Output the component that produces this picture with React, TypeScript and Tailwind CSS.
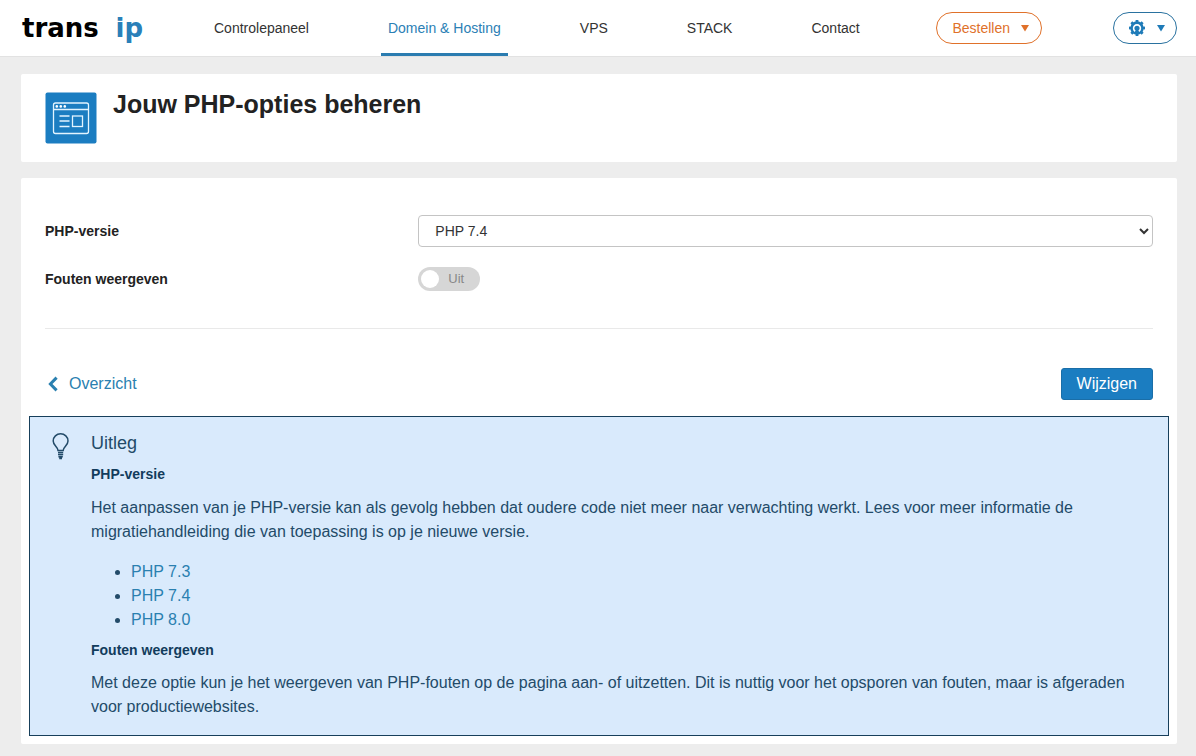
import React, { useState } from "react";

const navItems = [
  { label: "Controlepaneel", active: false },
  { label: "Domein & Hosting", active: true },
  { label: "VPS", active: false },
  { label: "STACK", active: false },
  { label: "Contact", active: false },
];

const versions = ["PHP 7.3", "PHP 7.4", "PHP 8.0"];

function Caret() {
  return (
    <svg className="h-2 w-2 fill-current" viewBox="0 0 8 8" aria-hidden="true">
      <path d="M0 1h8L4 7.5z" />
    </svg>
  );
}

function GearIcon() {
  return (
    <svg className="h-4 w-4" viewBox="0 0 16 16" aria-hidden="true">
      <g fill="currentColor">
        <circle cx="8" cy="8" r="6.7" />
        <rect x="6.6" y="0" width="2.8" height="16" />
        <rect x="0" y="6.6" width="16" height="2.8" />
        <rect x="6.6" y="0" width="2.8" height="16" transform="rotate(45 8 8)" />
        <rect x="6.6" y="0" width="2.8" height="16" transform="rotate(-45 8 8)" />
      </g>
      <path d="M6.2 11.2A3.4 3.4 0 1 1 9.8 11.2" fill="none" stroke="#fff" strokeWidth="1.6" />
    </svg>
  );
}

function WindowIcon() {
  return (
    <svg className="size-[52px] shrink-0" viewBox="0 0 52 52" aria-hidden="true">
      <rect x="0.5" y="0.5" width="51" height="51" rx="2" fill="#1b7dc1" />
      <g fill="none" stroke="#e2f4ff" strokeWidth="1.3">
        <rect x="8.5" y="11" width="35" height="30.5" rx="2" />
        <path d="M8.5 17.5h35M14.5 24h10M14.5 29h10M14.5 34.5h10" />
        <rect x="27.5" y="24" width="10" height="10.5" />
      </g>
      <g fill="#fff">
        <circle cx="11.8" cy="14.4" r="1.3" />
        <circle cx="15.8" cy="14.4" r="1.3" />
        <circle cx="19.8" cy="14.4" r="1.3" />
      </g>
    </svg>
  );
}

function BulbIcon() {
  return (
    <svg className="mt-[2px] h-7 w-[18px] shrink-0" viewBox="0 0 18 28" fill="none" stroke="currentColor" aria-hidden="true">
      <path
        d="M6 17.4C5.8 13.8 1.2 12.4 1.2 8a7.4 7.2 0 0 1 14.8 0c0 4.4-4.6 5.8-4.8 9.4z"
        strokeWidth="1.5"
      />
      <path d="M6 19.6h5.2M6 21.6h5.2" strokeWidth="1.5" />
      <path d="M6.4 23.6h4.4M7.2 25.4h2.8" strokeWidth="1.7" />
    </svg>
  );
}

function Header() {
  return (
    <header className="border-b border-[#e2e2e2] bg-white">
      <div className="flex h-14 items-stretch justify-between pr-[19px] pl-[22px]">
        <div className="flex items-stretch gap-16">
          <a
            href="#home"
            className="flex w-[121px] items-center justify-between pb-px font-['DejaVu_Sans',sans-serif] text-[26px] leading-8 font-bold text-black"
          >
            <span>trans</span>
            <span className="text-[#2a80b9]">ip</span>
          </a>
          <nav className="flex items-stretch gap-[65px]">
            {navItems.map((item) => (
              <a
                key={item.label}
                href="#nav"
                className={
                  item.active
                    ? "flex items-center border-y-3 border-t-transparent border-b-[#2b7cb0] px-[7px] text-sm whitespace-nowrap text-[#2b80b5]"
                    : "flex items-center px-[7px] text-sm whitespace-nowrap text-[#333]"
                }
              >
                {item.label}
              </a>
            ))}
          </nav>
        </div>
        <div className="flex items-center gap-[71px]">
          <button
            type="button"
            className="flex h-8 items-center gap-[11px] rounded-full border border-[#e0712a] pr-3 pl-[15px] text-sm text-[#e0712a]"
          >
            Bestellen
            <Caret />
          </button>
          <button
            type="button"
            aria-label="Account"
            className="flex h-8 items-center gap-3 rounded-full border border-[#2a72a0] pr-[11px] pl-[15px] text-[#1f7bb8]"
          >
            <GearIcon />
            <Caret />
          </button>
        </div>
      </div>
    </header>
  );
}

function Explanation() {
  return (
    <section className="mt-4 flex gap-[21px] border border-[#173f5b] bg-[#d9eafc] px-[22px] pt-[14px] pb-4 text-[#234b69]">
      <BulbIcon />
      <div className="min-w-0 flex-1 text-base leading-6">
        <h2 className="text-lg leading-6">Uitleg</h2>
        <h3 className="mt-[7px] text-sm leading-6 font-bold text-[#123c5c]">PHP-versie</h3>
        <p className="mt-[10px]">
          Het aanpassen van je PHP-versie kan als gevolg hebben dat oudere code niet meer naar verwachting werkt. Lees
          voor meer informatie de migratiehandleiding die van toepassing is op je nieuwe versie.
        </p>
        <ul className="mt-4 list-disc pl-10">
          {versions.map((version) => (
            <li key={version}>
              <a href="#migratie" className="text-[#2a80b0]">
                {version}
              </a>
            </li>
          ))}
        </ul>
        <h3 className="mt-[6px] text-sm leading-6 font-bold text-[#123c5c]">Fouten weergeven</h3>
        <p className="mt-[9px]">
          Met deze optie kun je het weergeven van PHP-fouten op de pagina aan- of uitzetten. Dit is nuttig voor het
          opsporen van fouten, maar is afgeraden voor productiewebsites.
        </p>
      </div>
    </section>
  );
}

export default function App() {
  const [version, setVersion] = useState("PHP 7.4");
  const [showErrors, setShowErrors] = useState(false);

  return (
    <div className="min-h-screen bg-[#ededed] font-['Liberation_Sans',Arial,sans-serif] text-[#222]">
      <Header />
      <main className="flex flex-col gap-4 pt-[17px] pr-[19px] pb-3 pl-[21px]">
        <section className="flex gap-4 rounded-xs bg-white px-6 py-[18px]">
          <WindowIcon />
          <h1 className="text-[25px] leading-6 font-bold">Jouw PHP-opties beheren</h1>
        </section>

        <section className="rounded-xs bg-white px-2 pt-[37px] pb-2">
          <form onSubmit={(e) => e.preventDefault()}>
            <div className="mx-4 grid grid-cols-[1fr_2fr] items-center gap-x-[6px] gap-y-5 border-b border-[#e9e9e9] pb-[37px] text-sm">
              <label htmlFor="version" className="font-bold">
                PHP-versie
              </label>
              <select
                id="version"
                value={version}
                onChange={(e) => setVersion(e.target.value)}
                className="h-8 w-full rounded-sm border border-[#c4c4c4] bg-white pl-3 text-sm text-[#333]"
              >
                {versions.map((v) => (
                  <option key={v}>{v}</option>
                ))}
              </select>
              <label htmlFor="errors" className="font-bold">
                Fouten weergeven
              </label>
              <label className="flex h-6 w-[62px] items-center gap-[9px] rounded-full bg-[#d6d6d6] px-[3px] text-[13px] text-[#888] has-checked:flex-row-reverse has-checked:bg-[#1b7dc1] has-checked:text-white">
                <input
                  id="errors"
                  type="checkbox"
                  checked={showErrors}
                  onChange={(e) => setShowErrors(e.target.checked)}
                  className="size-[18px] appearance-none rounded-full bg-white"
                />
                <span>{showErrors ? "Aan" : "Uit"}</span>
              </label>
            </div>

            <div className="mx-4 mt-[39px] flex items-center justify-between">
              <a href="#overzicht" className="flex items-center gap-[11px] pl-[3px] text-base text-[#2a80b0]">
                <svg className="h-4 w-[10px]" viewBox="0 0 10 16" fill="none" aria-hidden="true">
                  <path d="M8.6 1.6 2.4 8l6.2 6.4" stroke="currentColor" strokeWidth="3" />
                </svg>
                Overzicht
              </a>
              <button
                type="submit"
                className="h-8 rounded-[3px] border border-[#1a6ea8] bg-[#1b7dc1] px-[15px] text-base text-white"
              >
                Wijzigen
              </button>
            </div>
          </form>
          <Explanation />
        </section>
      </main>
    </div>
  );
}
